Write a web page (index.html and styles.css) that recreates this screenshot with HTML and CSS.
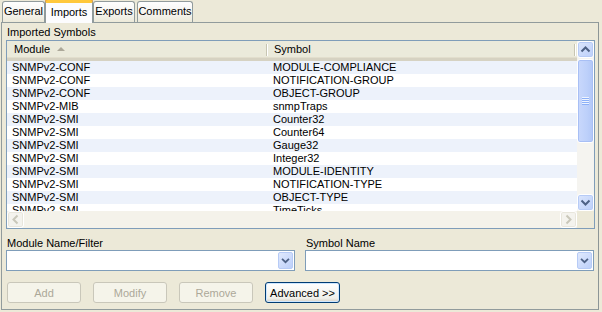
FILE: index.html
```html
<!DOCTYPE html>
<html lang="en">

<head>
  <meta charset="UTF-8">
  <title>Imports</title>
  <link rel="stylesheet" href="styles.css">
</head>

<body>
  <div class="tabs">
    <div class="tab tab-general">General</div>
    <div class="tab tab-imports active">Imports</div>
    <div class="tab tab-exports">Exports</div>
    <div class="tab tab-comments">Comments</div>
  </div>

  <div class="panel">
    <div class="group-label">Imported Symbols</div>

    <div class="list">
      <div class="list-main">
        <div class="list-head">
          <div class="head-cell head-module">Module <span class="sort"></span></div>
          <div class="head-cell head-symbol">Symbol</div>
        </div>
        <div class="rows">
          <div class="row alt"><div class="c-module">SNMPv2-CONF</div><div class="c-symbol">MODULE-COMPLIANCE</div></div>
          <div class="row"><div class="c-module">SNMPv2-CONF</div><div class="c-symbol">NOTIFICATION-GROUP</div></div>
          <div class="row alt"><div class="c-module">SNMPv2-CONF</div><div class="c-symbol">OBJECT-GROUP</div></div>
          <div class="row"><div class="c-module">SNMPv2-MIB</div><div class="c-symbol">snmpTraps</div></div>
          <div class="row alt"><div class="c-module">SNMPv2-SMI</div><div class="c-symbol">Counter32</div></div>
          <div class="row"><div class="c-module">SNMPv2-SMI</div><div class="c-symbol">Counter64</div></div>
          <div class="row alt"><div class="c-module">SNMPv2-SMI</div><div class="c-symbol">Gauge32</div></div>
          <div class="row"><div class="c-module">SNMPv2-SMI</div><div class="c-symbol">Integer32</div></div>
          <div class="row alt"><div class="c-module">SNMPv2-SMI</div><div class="c-symbol">MODULE-IDENTITY</div></div>
          <div class="row"><div class="c-module">SNMPv2-SMI</div><div class="c-symbol">NOTIFICATION-TYPE</div></div>
          <div class="row alt"><div class="c-module">SNMPv2-SMI</div><div class="c-symbol">OBJECT-TYPE</div></div>
          <div class="row"><div class="c-module">SNMPv2-SMI</div><div class="c-symbol">TimeTicks</div></div>
        </div>
      </div>

      <div class="vscroll">
        <div class="sbtn">
          <svg width="15" height="15" viewBox="0 0 15 15"><path d="M3.5 9.5 L7.5 5.5 L11.5 9.5" fill="none" stroke="#4d6185" stroke-width="2"/></svg>
        </div>
        <div class="vtrack">
          <div class="thumb">
            <span class="grip"></span>
          </div>
        </div>
        <div class="sbtn">
          <svg width="15" height="15" viewBox="0 0 15 15"><path d="M3.5 5.5 L7.5 9.5 L11.5 5.5" fill="none" stroke="#4d6185" stroke-width="2"/></svg>
        </div>
      </div>

      <div class="hscroll">
        <div class="sbtn off">
          <svg width="15" height="15" viewBox="0 0 15 15"><path d="M9.5 3.5 L5.5 7.5 L9.5 11.5" fill="none" stroke="#c9c7ba" stroke-width="2"/></svg>
        </div>
        <div class="htrack"></div>
        <div class="sbtn off">
          <svg width="15" height="15" viewBox="0 0 15 15"><path d="M5.5 3.5 L9.5 7.5 L5.5 11.5" fill="none" stroke="#c9c7ba" stroke-width="2"/></svg>
        </div>
      </div>

      <div class="corner"></div>
    </div>

    <div class="fields">
      <div class="field">
        <div class="field-label">Module Name/Filter</div>
        <div class="combo">
          <div class="combo-btn">
            <svg width="15" height="15" viewBox="0 0 15 15"><path d="M3.5 5.5 L7.5 9.5 L11.5 5.5" fill="none" stroke="#4d6185" stroke-width="2"/></svg>
          </div>
        </div>
      </div>
      <div class="field">
        <div class="field-label">Symbol Name</div>
        <div class="combo">
          <div class="combo-btn">
            <svg width="15" height="15" viewBox="0 0 15 15"><path d="M3.5 5.5 L7.5 9.5 L11.5 5.5" fill="none" stroke="#4d6185" stroke-width="2"/></svg>
          </div>
        </div>
      </div>
    </div>

    <div class="buttons">
      <button class="btn" disabled>Add</button>
      <button class="btn" disabled>Modify</button>
      <button class="btn" disabled>Remove</button>
      <button class="btn default">Advanced &gt;&gt;</button>
    </div>
  </div>
</body>

</html>
```

FILE: styles.css
```css
* {
  box-sizing: border-box;
}

body {
  margin: 0;
  background: #ece9d8;
  font-family: "Liberation Sans", Arial, sans-serif;
  font-size: 11px;
  color: #000;
  width: 602px;
  height: 312px;
  overflow: hidden;
}

/* tabs */

.tabs {
  display: flex;
  align-items: flex-end;
  height: 23px;
  padding-left: 2px;
  position: relative;
  z-index: 1;
}

.tab {
  height: 21px;
  line-height: 18px;
  text-align: center;
  border: 1px solid #919b9c;
  border-bottom: none;
  border-radius: 3px 3px 0 0;
  background: linear-gradient(#fefefe, #f4f3ee 60%, #ece9d8);
  margin-bottom: 1px;
}

.tab-general {
  width: 43px;
}

.tab-imports {
  width: 48px;
}

.tab-exports {
  width: 42px;
}

.tab-comments {
  width: 56px;
  margin-left: 2px;
}

.tab.active {
  height: 23px;
  margin-bottom: 0;
  line-height: 18px;
  background: #fcfcfe;
  border-top: 3px solid #ffc83c;
  box-shadow: inset 0 0 0 0 transparent, 0 -1px 0 #e68b2c;
  border-color: #919b9c;
  border-top-color: #ffc83c;
}

/* panel */

.panel {
  margin: -1px 3px 0 1px;
  height: 288px;
  border: 1px solid #919b9c;
  border-right-color: #8c9596;
  padding: 2px 3px 0 4px;
  background: #ece9d8;
}

.group-label {
  line-height: 14px;
  height: 14px;
  margin-bottom: 1px;
  padding-left: 1px;
}

/* list */

.list {
  height: 189px;
  border: 1px solid #7f9db9;
  background: #fff;
  display: grid;
  grid-template-columns: 1fr 17px;
  grid-template-rows: 1fr 17px;
  overflow: hidden;
}

.list-main {
  overflow: hidden;
}

.list-head {
  display: flex;
  height: 20px;
  background: #ebeadb;
  border-bottom: 3px solid #d6d2c2;
  box-shadow: inset 0 -1px 0 #e2decd;
}

.head-cell {
  line-height: 17px;
  padding-left: 7px;
  position: relative;
}

.head-module {
  width: 260px;
}

.head-symbol {
  width: 308px;
}

.head-module::after,
.head-symbol::after {
  content: "";
  position: absolute;
  right: 0;
  top: 3px;
  bottom: 2px;
  width: 1px;
  background: #c7c5b2;
  box-shadow: 1px 0 0 #fff;
}

.sort {
  display: inline-block;
  width: 0;
  height: 0;
  margin-left: 4px;
  vertical-align: 2px;
  border-left: 4px solid transparent;
  border-right: 4px solid transparent;
  border-bottom: 4px solid #aca899;
}

.row {
  display: flex;
  height: 13px;
  line-height: 13px;
}

.row.alt {
  background: #edf2fb;
}

.c-module {
  width: 260px;
  padding-left: 5px;
}

.c-symbol {
  padding-left: 6px;
}

/* scrollbars */

.vscroll {
  display: flex;
  flex-direction: column;
  background: #f5f4f0;
}

.vtrack {
  flex: 1;
  padding: 1px 0;
}

.sbtn {
  width: 17px;
  height: 17px;
  border: 1px solid #fff;
  border-radius: 3px;
  background: linear-gradient(135deg, #dbe6fd, #bccff9);
  box-shadow: inset 0 0 0 1px #b7cbf6;
  display: flex;
  align-items: center;
  justify-content: center;
}

.sbtn.off {
  background: #f4f3ee;
  box-shadow: inset 0 0 0 1px #e8e6dc;
}

.thumb {
  height: 84px;
  border: 1px solid #fff;
  border-radius: 3px;
  background: linear-gradient(90deg, #c9d8fc, #bdd0fa 60%, #b2c7f7);
  box-shadow: inset 0 0 0 1px #a8bff5;
  display: flex;
  align-items: center;
  justify-content: center;
}

.grip {
  width: 7px;
  height: 8px;
  background: repeating-linear-gradient(#eef4fe 0 1px, #8cb0f8 1px 2px);
}

.hscroll {
  display: flex;
  background: #f4f2ea;
}

.htrack {
  flex: 1;
}

.corner {
  background: #ece9d8;
}

/* combo fields */

.fields {
  display: grid;
  grid-template-columns: 289px 289px;
  column-gap: 10px;
  margin-top: 7px;
}

.field-label {
  line-height: 14px;
  padding-left: 1px;
}

.combo {
  height: 21px;
  border: 1px solid #7f9db9;
  background: #fff;
  display: flex;
  justify-content: flex-end;
  padding: 1px;
}

.combo-btn {
  width: 15px;
  height: 17px;
  border: 1px solid #b7cbf6;
  border-radius: 2px;
  background: linear-gradient(135deg, #e0e9fd, #bdd0fa);
  display: flex;
  align-items: center;
  justify-content: center;
}

/* buttons */

.buttons {
  display: flex;
  gap: 12px;
  margin-top: 11px;
  padding-left: 1px;
}

.btn {
  width: 74px;
  height: 21px;
  font-family: "Liberation Sans", Arial, sans-serif;
  font-size: 11px;
  padding: 0;
  border: 1px solid #c9c7ba;
  border-radius: 3px;
  background: #f5f4ea;
  color: #aca899;
}

.btn.default {
  width: 75px;
  color: #000;
  border-color: #003c74;
  background: linear-gradient(#ffffff, #f0f0ea 80%, #d6d0c5);
  box-shadow: inset 0 0 0 1px #cee7ff;
}
```
